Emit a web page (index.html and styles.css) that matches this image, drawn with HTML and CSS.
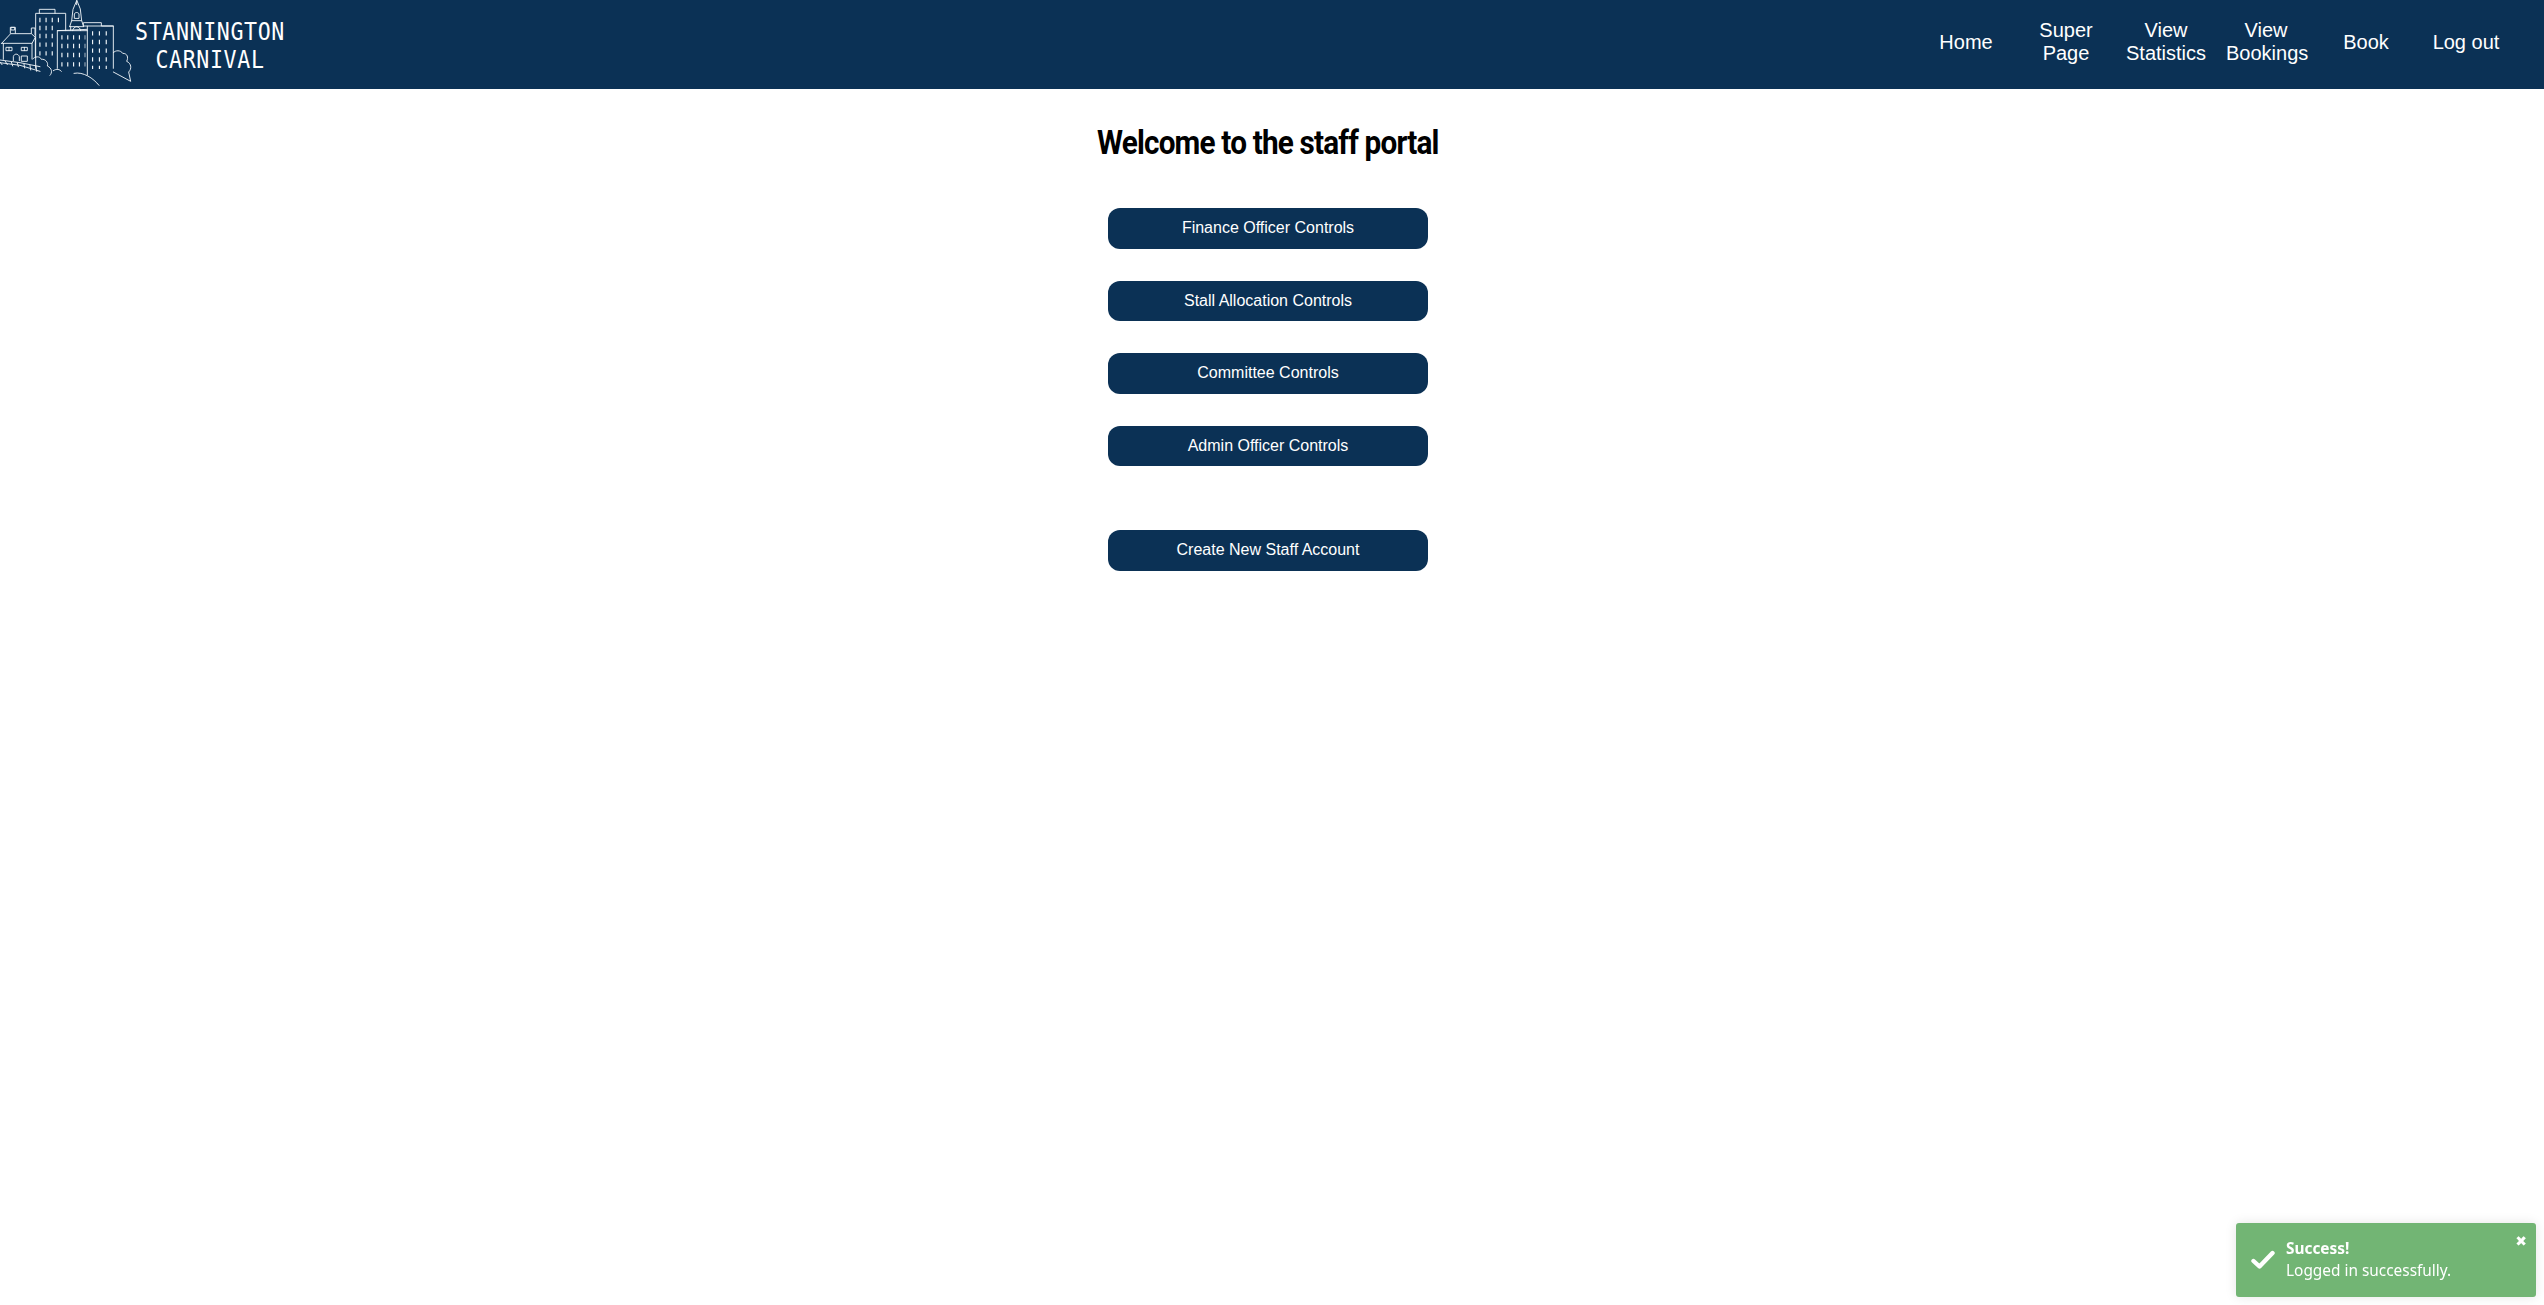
FILE: index.html
```html
<!DOCTYPE html>
<html lang="en">
<head>
    <meta charset="UTF-8">
    <meta name="viewport" content="width=device-width, initial-scale=1.0">
    <title>Staff Portal - Stannington Carnival</title>
    <link rel="stylesheet" href="styles.css">
</head>
<body>
    <header class="navbar">
        <a class="brand" href="#">
            <svg class="brand-logo" viewBox="0 0 420 270" fill="none" stroke="#eef3f7" stroke-width="2.8" stroke-linejoin="round" stroke-linecap="round">
                <!-- tall block behind -->
                <path d="M107 205V40H197V92M118 40V28H165V40"/>
                <path d="M118 60H190" stroke-width="13" stroke-linecap="butt" stroke-dasharray="3.5 15"/>
                <path d="M118 84H170" stroke-width="13" stroke-linecap="butt" stroke-dasharray="3.5 15"/>
                <path d="M118 108H170" stroke-width="13" stroke-linecap="butt" stroke-dasharray="3.5 15"/>
                <path d="M118 134H170" stroke-width="13" stroke-linecap="butt" stroke-dasharray="3.5 15"/>
                <path d="M118 160H170" stroke-width="13" stroke-linecap="butt" stroke-dasharray="3.5 15"/>
                <!-- clock tower -->
                <path d="M230 2L219 28L215 62H245L241 28ZM230 2V14M209 80L215 62M251 80L245 62M209 80H250M212 80V90M218 92C220 76 240 76 242 92"/>
                <path d="M223 54V42C225 36 235 36 237 42V54Z"/>
                <!-- front blocks -->
                <path d="M172 205V92L262 88V225M172 92H262"/>
                <path d="M262 88V78H250V68H304V78H340V205M262 78H340"/>
                <path d="M184 112H256" stroke-width="13" stroke-linecap="butt" stroke-dasharray="3.5 14"/>
                <path d="M184 138H256" stroke-width="13" stroke-linecap="butt" stroke-dasharray="3.5 14"/>
                <path d="M184 165H256" stroke-width="13" stroke-linecap="butt" stroke-dasharray="3.5 14"/>
                <path d="M184 193H256" stroke-width="13" stroke-linecap="butt" stroke-dasharray="3.5 14"/>
                <path d="M276 100H332" stroke-width="13" stroke-linecap="butt" stroke-dasharray="3.5 17"/>
                <path d="M276 126H332" stroke-width="13" stroke-linecap="butt" stroke-dasharray="3.5 17"/>
                <path d="M276 152H332" stroke-width="13" stroke-linecap="butt" stroke-dasharray="3.5 17"/>
                <path d="M276 178H332" stroke-width="13" stroke-linecap="butt" stroke-dasharray="3.5 17"/>
                <path d="M276 202H332" stroke-width="10" stroke-linecap="butt" stroke-dasharray="3.5 17"/>
                <!-- house -->
                <path d="M5 130L32 101H94L106 112L96 130H5ZM10 130V178M96 130V176M106 112V172M31 100V82H46V100M94 100V84H105V105"/>
                <path d="M34 82H44V90H34ZM19 142H36V152H19ZM65 142H82V152H65ZM27 142V152M73 142V152M40 182V170C42 160 55 160 58 170V182M65 168H82V184H65Z"/>
                <path d="M0 180L60 188L120 200M0 188L60 196L120 214M0 186L6 194M16 184L22 194M34 186L38 198M52 188L55 200M72 192L74 204M90 196L92 210M108 198L110 214"/>
                <!-- trees and hill -->
                <path d="M97 178C105 168 120 168 124 178C136 176 146 188 142 198C156 204 158 218 150 226M160 212C170 205 180 208 184 214"/>
                <path d="M222 220C250 214 280 235 297 256"/>
                <path d="M340 158C346 150 362 150 368 160C382 160 386 172 380 184C394 190 396 206 386 216L392 244L340 216"/>
            </svg>
            <span class="brand-name">STANNINGTON<br>CARNIVAL</span>
        </a>
        <nav class="nav-links">
            <a href="#">Home</a>
            <a href="#">Super Page</a>
            <a href="#">View Statistics</a>
            <a href="#">View Bookings</a>
            <a href="#">Book</a>
            <a href="#">Log out</a>
        </nav>
    </header>

    <main class="portal">
        <h1>Welcome to the staff portal</h1>
        <a class="portal-btn" href="#">Finance Officer Controls</a>
        <a class="portal-btn" href="#">Stall Allocation Controls</a>
        <a class="portal-btn" href="#">Committee Controls</a>
        <a class="portal-btn" href="#">Admin Officer Controls</a>
        <a class="portal-btn portal-btn-new" href="#">Create New Staff Account</a>
    </main>

    <div class="toast">
        <svg class="toast-icon" viewBox="0 0 24 20" fill="none" stroke="#fff" stroke-width="4.4" stroke-linecap="round" stroke-linejoin="round">
            <path d="M2.5 11L8.5 16.5L21.5 3"/>
        </svg>
        <div class="toast-body">
            <div class="toast-title">Success!</div>
            <div>Logged in successfully.</div>
        </div>
        <span class="toast-close">✖</span>
    </div>
</body>
</html>
```

FILE: styles.css
```css
* {
    box-sizing: border-box;
}
body {
    margin: 0;
    background: #fff;
    font-family: "Liberation Sans", Arial, sans-serif;
}
a {
    color: inherit;
    text-decoration: none;
}
.navbar {
    display: flex;
    justify-content: space-between;
    align-items: center;
    height: 89px;
    padding-right: 28px;
    background: #0b3155;
    color: #fff;
}
.brand {
    display: flex;
    align-items: flex-start;
    height: 89px;
}
.brand-logo {
    width: 140px;
    height: 90px;
    flex: none;
}
.brand-name {
    width: 170px;
    margin: 18px 0 0 -15px;
    font-family: "DejaVu Sans Mono", monospace;
    font-size: 24px;
    line-height: 28px;
    letter-spacing: 0.7px;
    text-align: center;
    transform: scaleX(0.9);
    white-space: nowrap;
}
.nav-links {
    display: flex;
    align-items: center;
    margin-top: -5px;
}
.nav-links a {
    width: 100px;
    padding: 0 10px;
    font-size: 20px;
    line-height: 23px;
    text-align: center;
}
.portal {
    display: flex;
    flex-direction: column;
    align-items: center;
    gap: 32px;
    padding: 32px 8px 0 0;
}
.portal h1 {
    margin: 0 0 11px;
    font-family: "Roboto", sans-serif;
    font-size: 33px;
    font-weight: 700;
    line-height: 44px;
    letter-spacing: -0.9px;
    white-space: nowrap;
    transform: scaleX(0.9);
    color: #000;
}
.portal-btn {
    width: 320px;
    height: 40.5px;
    line-height: 39px;
    border-radius: 12px;
    background: #0b3155;
    color: #fff;
    font-size: 16px;
    text-align: center;
}
.portal-btn-new {
    margin-top: 32px;
}
.toast {
    position: fixed;
    right: 8px;
    bottom: 8px;
    display: flex;
    align-items: center;
    width: 300px;
    height: 74px;
    padding-left: 15px;
    border-radius: 3px;
    background: #72b574;
    box-shadow: 0 0 12px rgba(0,0,0,0.1);
    color: #fff;
    font-family: "Noto Sans", sans-serif;
    font-size: 15.4px;
    line-height: 22px;
}
.toast-icon {
    width: 24px;
    height: 20px;
    flex: none;
    margin: 0 11px 0 0;
}
.toast-title {
    font-weight: 700;
}
.toast-close {
    position: absolute;
    top: 9px;
    right: 9px;
    font-family: "DejaVu Sans", sans-serif;
    font-size: 14px;
    line-height: 18px;
}
```
